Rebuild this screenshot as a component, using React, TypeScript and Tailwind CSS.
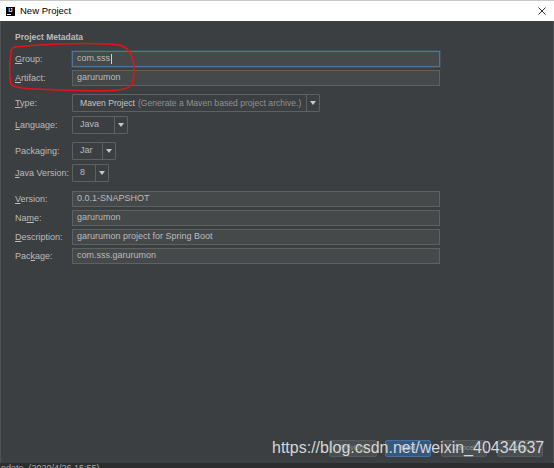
import React from "react";

const labelCls = "w-[57px] shrink-0 text-[9px] text-[#bbbbbb] leading-none";

function Label({ text, u }: { text: string; u: number }) {
  if (u < 0) return <div className={labelCls}>{text}</div>;
  return (
    <div className={labelCls}>
      {text.slice(0, u)}
      <span className="underline underline-offset-[1px]">{text[u]}</span>
      {text.slice(u + 1)}
    </div>
  );
}

function Field({ value, focused }: { value: string; focused?: boolean }) {
  return (
    <div
      className={
        "h-[16px] w-[368px] flex items-center px-[4px] text-[9px] text-[#bbbbbb] bg-[#45494a] border " +
        (focused ? "border-[#4a75a0] shadow-[0_0_0_1px_rgba(70,109,148,0.35)]" : "border-[#5e6162]")
      }
    >
      {value}
      {focused && <span className="ml-[1px] w-px h-[10px] bg-[#d0d0d0]" />}
    </div>
  );
}

function Arrow() {
  return (
    <div className="w-[13px] h-full border-l border-[#5e6162] flex items-center justify-center">
      <svg width="6" height="4" viewBox="0 0 6 4">
        <path d="M0 0 L6 0 L3 4 Z" fill="#c8c8c8" />
      </svg>
    </div>
  );
}

function Combo({ w, children }: { w: string; children: React.ReactNode }) {
  return (
    <div className={"h-[18px] flex border border-[#5e6162] bg-[#3c3f41] rounded-[1px] " + w}>
      <div className="flex-1 flex items-center pl-[7px] text-[9px] text-[#bbbbbb] whitespace-nowrap overflow-hidden">
        {children}
      </div>
      <Arrow />
    </div>
  );
}

function Row({ children, className }: { children: React.ReactNode; className?: string }) {
  return <div className={"flex items-center " + (className ?? "")}>{children}</div>;
}

function Btn({ text, primary, w }: { text: string; primary?: boolean; w: string }) {
  return (
    <div
      className={
        "h-[17px] flex items-center justify-center text-[7px] rounded-[2px] border " +
        w +
        (primary
          ? " bg-[#365880] border-[#44709c] text-[#9fb4cc]"
          : " bg-[#4b4f51] border-[#575b5d] text-[#8e9294]")
      }
    >
      {text}
    </div>
  );
}

export default function App() {
  return (
    <div className="w-[554px] h-[468px] bg-[#3c3f41] relative overflow-hidden font-['Liberation_Sans',Arial,sans-serif]">
      {/* title bar */}
      <div className="h-[21px] bg-white border-t border-[#c9c9c9] flex items-center pl-[6px] pr-[8px]">
        <div className="w-[9px] h-[9px] bg-black relative flex flex-col items-center justify-start">
          <span className="text-[5px] leading-none text-white font-bold mt-[1px]">IJ</span>
          <span className="absolute left-[1px] bottom-[1px] w-[4px] h-px bg-white" />
        </div>
        <span className="ml-[5px] text-[9.5px] text-black">New Project</span>
        <svg className="ml-auto" width="8" height="8" viewBox="0 0 8 8">
          <path d="M0.5 0.5 L7.5 7.5 M7.5 0.5 L0.5 7.5" stroke="#333" strokeWidth="1" />
        </svg>
      </div>

      {/* body */}
      <div className="h-[442px] flex flex-col border-l border-r border-[#4e5254] pl-[14px] pr-[10px] pb-[6px]">
        <div className="mt-[9px] h-[14px] flex items-center text-[8.5px] font-bold text-[#bbbbbb]">
          Project Metadata
        </div>

        <Row className="mt-[7px]">
          <Label text="Group:" u={0} />
          <Field value="com.sss" focused />
        </Row>
        <Row className="mt-[3px]">
          <Label text="Artifact:" u={0} />
          <Field value="garurumon" />
        </Row>

        <Row className="mt-[8px]">
          <Label text="Type:" u={0} />
          <Combo w="w-[248px]">
            <span className="text-[#c4c4c4] text-[8.6px]">Maven Project</span>
            <span className="ml-[3px] text-[#8f9193] text-[8.6px]">(Generate a Maven based project archive.)</span>
          </Combo>
        </Row>
        <Row className="mt-[4px]">
          <Label text="Language:" u={0} />
          <Combo w="w-[56px]">Java</Combo>
        </Row>

        <Row className="mt-[8px]">
          <Label text="Packaging:" u={-1} />
          <Combo w="w-[44px]">Jar</Combo>
        </Row>
        <Row className="mt-[4px]">
          <Label text="Java Version:" u={0} />
          <Combo w="w-[37px]">8</Combo>
        </Row>

        <Row className="mt-[9px]">
          <Label text="Version:" u={0} />
          <Field value="0.0.1-SNAPSHOT" />
        </Row>
        <Row className="mt-[3px]">
          <Label text="Name:" u={2} />
          <Field value="garurumon" />
        </Row>
        <Row className="mt-[3px]">
          <Label text="Description:" u={0} />
          <Field value="garurumon project for Spring Boot" />
        </Row>
        <Row className="mt-[3px]">
          <Label text="Package:" u={3} />
          <Field value="com.sss.garurumon" />
        </Row>

        <div className="mt-auto flex justify-end items-center">
          <Btn text="Previous" w="w-[48px]" />
          <div className="ml-[8px]">
            <Btn text="Next" primary w="w-[46px]" />
          </div>
          <div className="ml-[10px]">
            <Btn text="Cancel" w="w-[46px]" />
          </div>
          <div className="ml-[10px]">
            <Btn text="Help" w="w-[46px]" />
          </div>
        </div>
      </div>

      {/* status strip */}
      <div className="h-[5px] bg-[#2b2d2e] overflow-hidden">
        <div className="text-[9px] leading-none text-[#a8a8a8] pl-[1px] pt-[1px] whitespace-nowrap">
          pdate, (2020/4/26 15:55)
        </div>
      </div>

      {/* red annotation */}
      <svg className="absolute left-0 top-0 pointer-events-none" width="554" height="468">
        <path
          d="M15 47 C40 44, 95 42, 119 45 C135 48, 136 70, 132 84 C128 93, 95 91, 60 90 C35 89, 14 89, 11 84 C9 76, 10 60, 11 52 C11 48, 13 47, 17 47"
          fill="none"
          stroke="#e0141a"
          strokeWidth="1.6"
          strokeLinecap="round"
        />
      </svg>

      {/* watermark */}
      <div className="absolute left-[272px] top-[440px] text-[16px] leading-none text-[#d6d6d6] whitespace-nowrap pointer-events-none">
        https://blog.csdn.net/weixin_40434637
      </div>
    </div>
  );
}
